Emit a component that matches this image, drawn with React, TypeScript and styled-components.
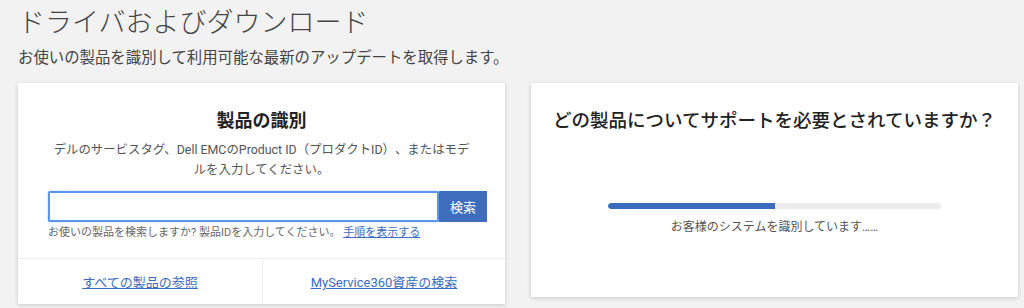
import styled, { createGlobalStyle } from 'styled-components';

const GlobalStyle = createGlobalStyle`
  body {
    margin: 0;
    background: #f2f2f2;
    font-family: Roboto, 'Noto Sans CJK JP', sans-serif;
    color: #333;
  }
`;

const Page = styled.div`
  padding: 0 6px 0 18px;
  height: 308px;
  overflow: hidden;
`;

const Heading = styled.h1`
  margin: 0;
  padding-top: 4px;
  font-size: 27px;
  line-height: 38px;
  font-weight: 300;
  color: #444;
`;

const Lead = styled.p`
  margin: 5px 0 0;
  font-size: 15.4px;
  line-height: 22px;
  color: #444;
`;

const Cards = styled.div`
  display: grid;
  grid-template-columns: 487px 487px;
  gap: 26px;
  align-items: start;
  margin-top: 14px;
`;

const Card = styled.section<{ $height: number }>`
  background: #fff;
  height: ${({ $height }) => $height}px;
  box-shadow: 0 1px 4px rgba(0, 0, 0, 0.18);
  display: flex;
  flex-direction: column;
`;

const CardBody = styled.div`
  flex: 1;
  padding-top: 26px;
`;

const Intro = styled.div`
  padding: 0 20px;
  text-align: center;
`;

const Form = styled.div`
  padding: 11px 18px 0 30px;
`;

const CardTitle = styled.h2`
  margin: 0;
  font-size: 18px;
  line-height: 24px;
  font-weight: 700;
  color: #222;
`;

const Description = styled.p`
  margin: 7px 0 0;
  font-size: 12.4px;
  line-height: 20px;
  color: #555;
  text-spacing-trim: space-all;
`;

const SearchRow = styled.div`
  display: flex;
`;

const SearchInput = styled.input`
  flex: 1;
  height: 31px;
  box-sizing: border-box;
  border: 2px solid #5b94ee;
  border-radius: 2px;
  padding: 0 8px;
  font-size: 13px;
  outline: none;
  box-shadow: 0 0 2px rgba(80, 140, 240, 0.5);
`;

const SearchButton = styled.button`
  width: 48px;
  height: 31px;
  border: none;
  background: #3f6dbd;
  color: #fff;
  font-family: inherit;
  font-size: 13px;
`;

const Help = styled.div`
  margin-top: 3px;
  font-size: 11px;
  line-height: 16px;
  color: #666;
`;

const Link = styled.a`
  color: #3b6cc0;
  text-decoration: underline;
  cursor: pointer;
`;

const Footer = styled.div`
  display: grid;
  grid-template-columns: 244px 1fr;
  height: 45px;
  border-top: 1px solid #ececec;
`;

const FooterCell = styled.div<{ $divider?: boolean }>`
  display: flex;
  align-items: center;
  justify-content: center;
  font-size: 13px;
  border-left: ${({ $divider }) => ($divider ? '1px solid #ececec' : 'none')};
`;

const RightBody = styled.div`
  padding-top: 26px;
  display: flex;
  flex-direction: column;
  align-items: center;
`;

const Question = styled.h2`
  margin: 0;
  font-size: 18.5px;
  line-height: 24px;
  font-weight: 500;
  color: #222;
`;

const Track = styled.div`
  margin-top: 70px;
  width: 333px;
  height: 6px;
  border-radius: 3px;
  background: #ebebeb;
  overflow: hidden;
`;

const Fill = styled.div`
  height: 100%;
  background: #3d6cbe;
  border-radius: 3px 0 0 3px;
`;

const Status = styled.div`
  margin-top: 9px;
  font-size: 12px;
  line-height: 18px;
  color: #555;
`;

export default function App() {
  const progress = 50;
  return (
    <Page>
      <GlobalStyle />
      <Heading>ドライバおよびダウンロード</Heading>
      <Lead>お使いの製品を識別して利用可能な最新のアップデートを取得します。</Lead>
      <Cards>
        <Card $height={221}>
          <CardBody>
            <Intro>
              <CardTitle>製品の識別</CardTitle>
              <Description>
                デルのサービスタグ、Dell EMCのProduct ID（プロダクトID）、またはモデ
                <br />
                ルを入力してください。
              </Description>
            </Intro>
            <Form>
              <SearchRow>
                <SearchInput type="text" />
                <SearchButton type="button">検索</SearchButton>
              </SearchRow>
              <Help>
                お使いの製品を検索しますか? 製品IDを入力してください。 <Link>手順を表示する</Link>
              </Help>
            </Form>
          </CardBody>
          <Footer>
            <FooterCell>
              <Link>すべての製品の参照</Link>
            </FooterCell>
            <FooterCell $divider>
              <Link>MyService360資産の検索</Link>
            </FooterCell>
          </Footer>
        </Card>
        <Card $height={214}>
          <RightBody>
            <Question>どの製品についてサポートを必要とされていますか？</Question>
            <Track>
              <Fill style={{ width: `${progress}%` }} />
            </Track>
            <Status>お客様のシステムを識別しています……</Status>
          </RightBody>
        </Card>
      </Cards>
    </Page>
  );
}
